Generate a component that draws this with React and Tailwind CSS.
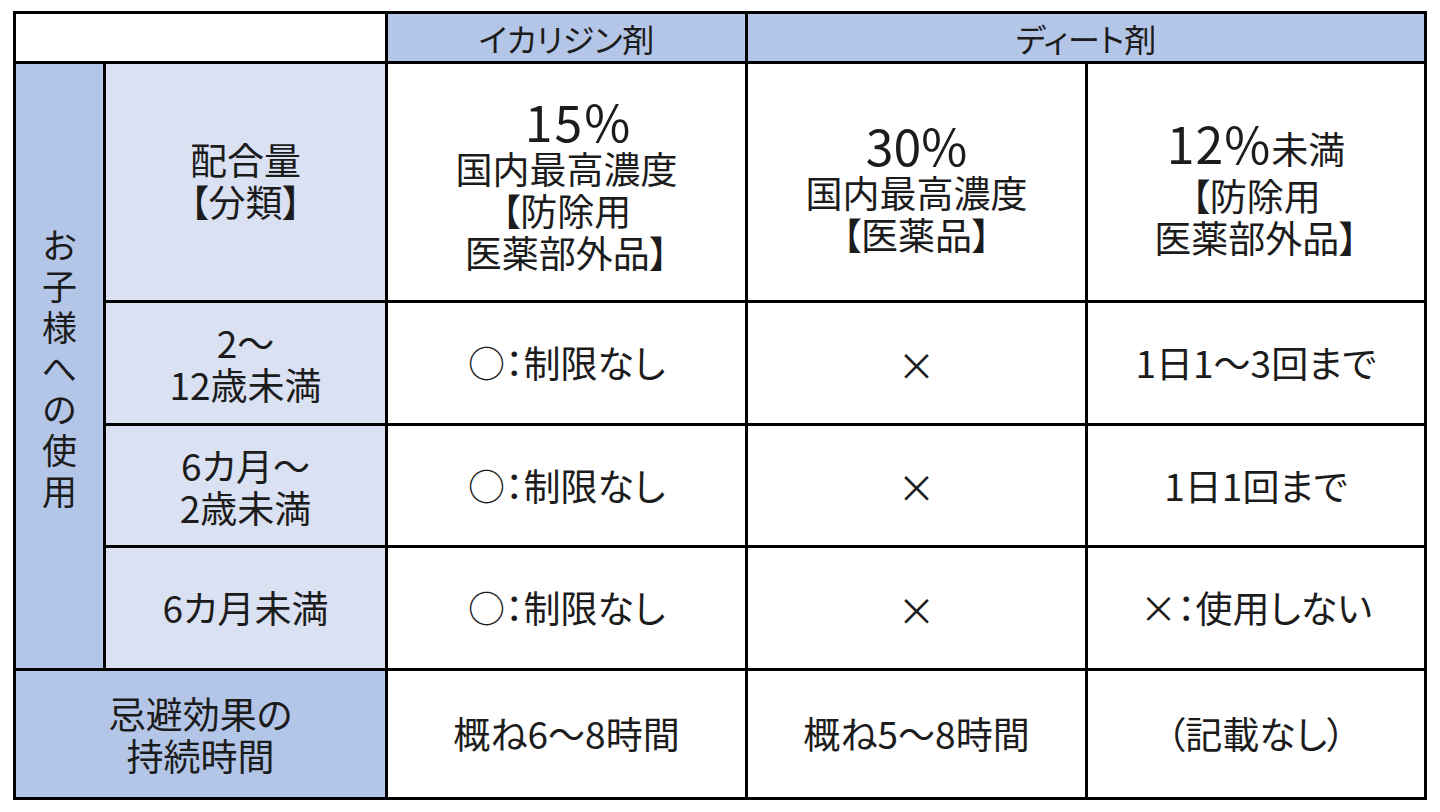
export default function App() {
  const cell = "flex items-center justify-center text-center";
  return (
    <div className="w-[1440px] h-[812px] bg-white pt-[11px] pl-[13px] text-[#1c1c1c] [font-family:'Noto_Sans_CJK_JP','Noto_Sans',sans-serif] [font-feature-settings:'palt']">
      <div className="grid w-[1414px] bg-black p-[3px] gap-[3px] grid-cols-[87px_279px_357px_337px_336px] grid-rows-[47px_236px_120px_119px_120px_126px]">
        {/* header */}
        <div className="col-span-2 bg-white" />
        <div className={`${cell} bg-[#b4c6e7] text-[32px] leading-none pt-[1px]`}>イカリジン剤</div>
        <div className={`${cell} col-span-2 bg-[#b4c6e7] text-[32px] leading-none pt-[1px]`}>ディート剤</div>

        {/* vertical label */}
        <div className={`${cell} row-span-4 bg-[#b4c6e7]`}>
          <p className="text-[35px] leading-[41px]">
            お<br />子<br />様<br />へ<br />の<br />使<br />用
          </p>
        </div>

        {/* row 1 */}
        <div className={`${cell} bg-[#d9e1f2] pb-[4px]`}>
          <p className="text-[37px] leading-[42px]">配合量<br />【分類】</p>
        </div>
        <div className={`${cell} bg-white pt-[2px]`}>
          <p className="text-[37px] leading-[42px]">
            <span className="inline-block text-[50px] leading-[54px] pl-[24px] tracking-[2px]">15%</span>
            <br />国内最高濃度<br />【防除用<br />医薬部外品】
          </p>
        </div>
        <div className={`${cell} bg-white pt-[8px]`}>
          <p className="text-[37px] leading-[42px]">
            <span className="inline-block text-[50px] leading-[52px]">30%</span>
            <br />国内最高濃度<br />【医薬品】
          </p>
        </div>
        <div className={`${cell} bg-white pt-[10px]`}>
          <p className="text-[37px] leading-[42px]">
            <span className="inline-block leading-[52px]"><span className="text-[50px] tracking-[1px]">12%</span>未満</span>
            <br />【防除用<br />医薬部外品】
          </p>
        </div>

        {/* row 2 */}
        <div className={`${cell} bg-[#d9e1f2]`}>
          <p className="text-[37px] leading-[42px]">2～<br />12歳未満</p>
        </div>
        <div className={`${cell} bg-white text-[37px]`}>○：制限なし</div>
        <div className={`${cell} bg-white text-[38px]`}>×</div>
        <div className={`${cell} bg-white text-[37px]`}>1日1～3回まで</div>

        {/* row 3 */}
        <div className={`${cell} bg-[#d9e1f2]`}>
          <p className="text-[37px] leading-[42px]">6カ月～<br />2歳未満</p>
        </div>
        <div className={`${cell} bg-white text-[37px]`}>○：制限なし</div>
        <div className={`${cell} bg-white text-[38px]`}>×</div>
        <div className={`${cell} bg-white text-[37px]`}>1日1回まで</div>

        {/* row 4 */}
        <div className={`${cell} bg-[#d9e1f2] text-[37px]`}>6カ月未満</div>
        <div className={`${cell} bg-white text-[37px]`}>○：制限なし</div>
        <div className={`${cell} bg-white text-[38px]`}>×</div>
        <div className={`${cell} bg-white text-[37px]`}>×：使用しない</div>

        {/* row 5 */}
        <div className={`${cell} col-span-2 bg-[#b4c6e7]`}>
          <p className="text-[37px] leading-[42px]">忌避効果の<br />持続時間</p>
        </div>
        <div className={`${cell} bg-white text-[37px]`}>概ね6～8時間</div>
        <div className={`${cell} bg-white text-[37px]`}>概ね5～8時間</div>
        <div className={`${cell} bg-white text-[37px]`}>（記載なし）</div>
      </div>
    </div>
  );
}
